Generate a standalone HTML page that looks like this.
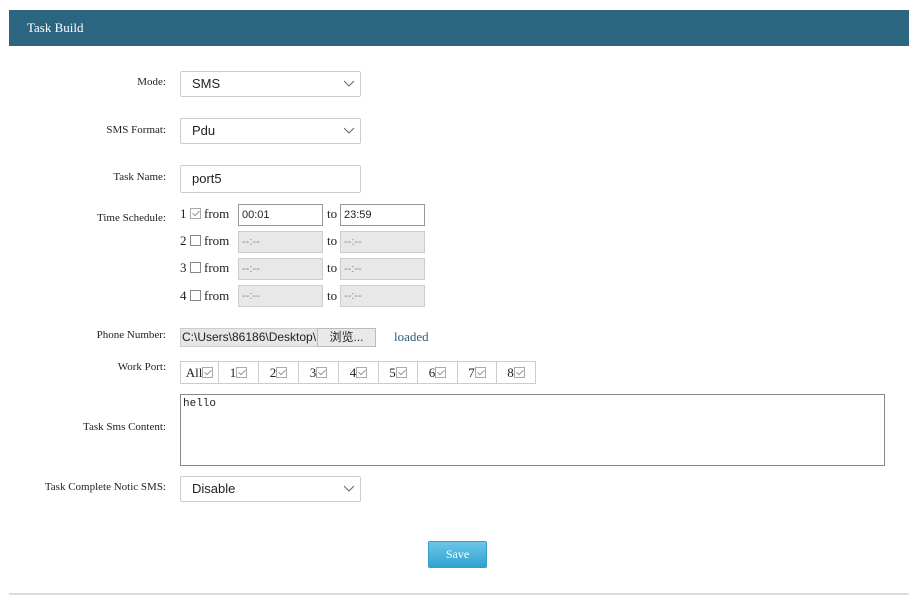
<!DOCTYPE html>
<html><head><meta charset="utf-8"><style>
*{box-sizing:border-box;margin:0;padding:0}
body{width:909px;height:599px;background:#fff;position:relative;overflow:hidden;font-family:"Liberation Serif",serif;font-size:11px;color:#222}
.a{position:absolute}
.hdr{left:9px;top:10px;width:900px;height:36px;background:#2b6580;color:#fff;font-size:13px;line-height:36px;padding-left:18px}
.lbl{right:743px;text-align:right;font-size:11px;white-space:nowrap}
.sel{left:180px;width:181px;height:26px;border:1px solid #ccc;border-radius:2px;font-family:"Liberation Sans",sans-serif;font-size:13px;line-height:24px;padding-left:11px;color:#222}
.sel svg{position:absolute;right:5px;top:8px}
.ti{width:85px;height:22px;border:1px solid #999;font-family:"Liberation Sans",sans-serif;font-size:11px;line-height:20px;padding-left:3px}
.dis{background:#e8e8e8;border-color:#ccc;color:#888}
.row{left:180px;font-size:13px;line-height:22px;white-space:nowrap}
.cb{display:inline-block;width:11px;height:11px;border:1px solid #888;vertical-align:-1px;position:relative}
.cb.c{border-color:#aaa}
.cb.c:after{content:"";position:absolute;left:3px;top:0px;width:3px;height:6px;border:solid #999;border-width:0 1px 1px 0;transform:rotate(45deg)}
.cell{top:361px;height:23px;border:1px solid #ccc;font-size:13px;line-height:21px;text-align:center;white-space:nowrap}
</style></head><body>
<div class="a hdr">Task Build</div>

<div class="a lbl" style="top:76px">Mode:</div>
<div class="a sel" style="top:71px">SMS<svg width="12" height="8"><path d="M1 1l5 5 5-5" fill="none" stroke="#666"/></svg></div>

<div class="a lbl" style="top:124px">SMS Format:</div>
<div class="a sel" style="top:118px">Pdu<svg width="12" height="8"><path d="M1 1l5 5 5-5" fill="none" stroke="#666"/></svg></div>

<div class="a lbl" style="top:171px">Task Name:</div>
<div class="a sel" style="top:165px;height:28px;line-height:26px">port5</div>

<div class="a lbl" style="top:212px">Time Schedule:</div>
<div class="a row" style="top:203px">1 <span class="cb c"></span> from</div>
<div class="a ti" style="left:238px;top:204px">00:01</div>
<div class="a row" style="left:327px;top:203px">to</div>
<div class="a ti" style="left:340px;top:204px">23:59</div>

<div class="a row" style="top:230px">2 <span class="cb"></span> from</div>
<div class="a ti dis" style="left:238px;top:231px">--:--</div>
<div class="a row" style="left:327px;top:230px">to</div>
<div class="a ti dis" style="left:340px;top:231px">--:--</div>

<div class="a row" style="top:257px">3 <span class="cb"></span> from</div>
<div class="a ti dis" style="left:238px;top:258px">--:--</div>
<div class="a row" style="left:327px;top:257px">to</div>
<div class="a ti dis" style="left:340px;top:258px">--:--</div>

<div class="a row" style="top:285px">4 <span class="cb"></span> from</div>
<div class="a ti dis" style="left:238px;top:285px">--:--</div>
<div class="a row" style="left:327px;top:285px">to</div>
<div class="a ti dis" style="left:340px;top:285px">--:--</div>

<div class="a lbl" style="top:329px">Phone Number:</div>
<div class="a" style="left:180px;top:328px;width:138px;height:19px;background:#e6e6e6;border:1px solid #ccc;font-family:'Liberation Sans',sans-serif;font-size:12px;line-height:17px;padding-left:1px;overflow:hidden;white-space:nowrap">C:\Users\86186\Desktop\</div>
<div class="a" style="left:317px;top:328px;width:59px;height:19px;background:#e9e9e9;border:1px solid #bbb;font-family:'Liberation Sans','Noto Sans CJK SC',sans-serif;font-size:12px;line-height:17px;text-align:center">浏览...</div>
<div class="a" style="left:394px;top:329px;font-size:13px;color:#2b5f7a">loaded</div>

<div class="a lbl" style="top:361px">Work Port:</div>
<div class="a cell" style="left:180px;width:39px">All<span class="cb c"></span></div>
<div class="a cell" style="left:218px;width:41px">1<span class="cb c"></span></div>
<div class="a cell" style="left:258px;width:41px">2<span class="cb c"></span></div>
<div class="a cell" style="left:298px;width:41px">3<span class="cb c"></span></div>
<div class="a cell" style="left:338px;width:41px">4<span class="cb c"></span></div>
<div class="a cell" style="left:378px;width:40px">5<span class="cb c"></span></div>
<div class="a cell" style="left:417px;width:41px">6<span class="cb c"></span></div>
<div class="a cell" style="left:457px;width:40px">7<span class="cb c"></span></div>
<div class="a cell" style="left:496px;width:40px">8<span class="cb c"></span></div>

<div class="a lbl" style="top:421px">Task Sms Content:</div>
<div class="a" style="left:180px;top:394px;width:705px;height:72px;border:1px solid #888;font-family:'Liberation Mono',monospace;font-size:11px;padding:3px 2px">hello</div>

<div class="a lbl" style="top:481px">Task Complete Notic SMS:</div>
<div class="a sel" style="top:476px">Disable<svg width="12" height="8"><path d="M1 1l5 5 5-5" fill="none" stroke="#666"/></svg></div>

<div class="a" style="left:428px;top:541px;width:59px;height:27px;border:1px solid #3a9cc4;border-radius:2px;background:linear-gradient(#6cc7e8,#2ea3d1);color:#fff;font-size:12px;line-height:25px;text-align:center">Save</div>

<div class="a" style="left:9px;top:593px;width:900px;height:2px;background:#ddd"></div>
</body></html>
